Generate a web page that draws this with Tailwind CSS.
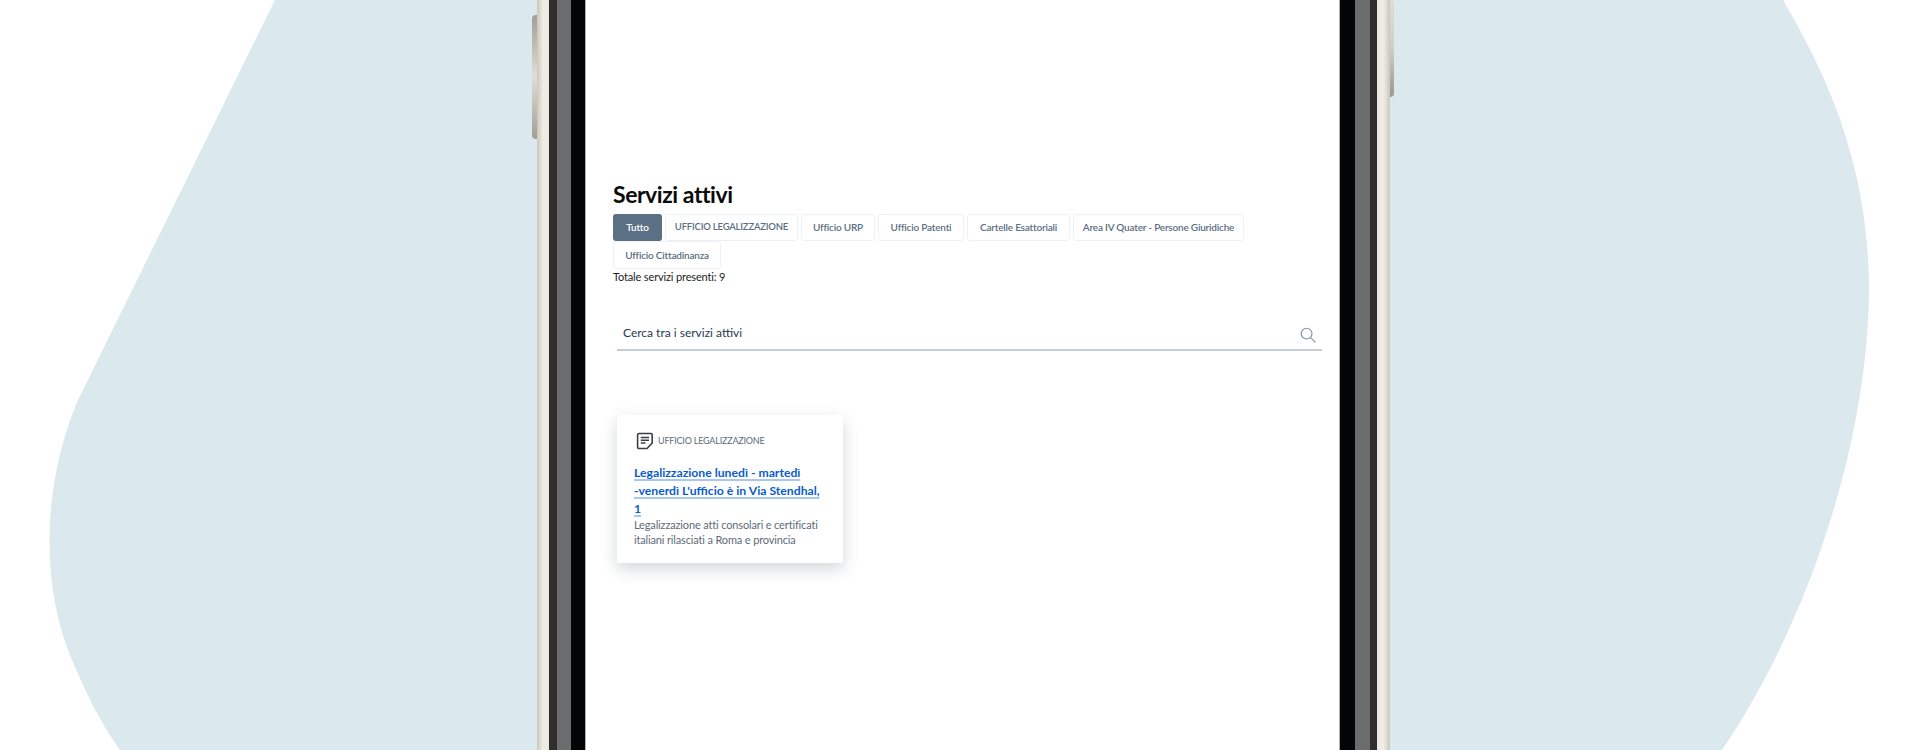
<!DOCTYPE html>
<html lang="it">
<head>
    <meta charset="UTF-8">
    <title>Servizi attivi</title>
    <script src="https://cdn.jsdelivr.net/npm/@tailwindcss/browser@4"></script>
</head>
<body class="bg-white font-['Lato','Noto_Sans',sans-serif] overflow-hidden">
    <div class="relative w-[1920px] h-[750px] overflow-hidden">
        <!-- background blobs -->
        <svg class="absolute inset-0" width="1920" height="750" viewBox="0 0 1920 750">
            <path fill="#dbe8ed" d="M275 0 L78 400 C40 490 42 590 72 660 C88 698 102 725 120 750 L1722 750 C1810 620 1868 440 1869 290 C1869 170 1830 80 1783 0 Z"/>
        </svg>

        <!-- side buttons -->
        <div class="absolute left-[532px] top-[15px] w-[6px] h-[124px] rounded-l-sm bg-gradient-to-b from-[#a09f96] via-[#e0ded6] to-[#a09f96]"></div>
        <div class="absolute left-[1390px] top-0 w-[4px] h-[97px] rounded-r-sm bg-gradient-to-b from-[#dedcd3] via-[#d0cec5] to-[#9a998f]"></div>

        <!-- phone -->
        <div class="relative flex h-full ml-[537px] w-[853px]">
            <div class="w-[12px] bg-gradient-to-r from-[#c9c6bc] via-[#f0ede6] to-[#ebe8e1]"></div>
            <div class="w-[8px] bg-[#2e2e2e]"></div>
            <div class="w-[14px] bg-[#6b6d6c]"></div>
            <div class="w-[14px] bg-[#020406]"></div>

            <main class="w-[755px] bg-white border-x border-[#b0b0b0] pt-[178px] pl-[27px] pr-[17px]">
                <h1 class="text-[23px] leading-[32px] font-bold text-[#0b0b0b] tracking-[-0.45px]">Servizi attivi</h1>
                <div class="flex flex-wrap gap-x-[3px] mt-[4px] w-[640px] text-[10px] font-semibold text-[#5b6f82] tracking-[-0.2px] whitespace-nowrap">
                    <button class="h-[27px] w-[49px] rounded-[3px] bg-[#5b6f85] text-white">Tutto</button>
                    <button class="h-[27px] w-[133px] rounded-[3px] border border-[#eef1f4] text-[9.5px]">UFFICIO LEGALIZZAZIONE</button>
                    <button class="h-[27px] w-[74px] rounded-[3px] border border-[#eef1f4]">Ufficio URP</button>
                    <button class="h-[27px] w-[86px] rounded-[3px] border border-[#eef1f4]">Ufficio Patenti</button>
                    <button class="h-[27px] w-[103px] rounded-[3px] border border-[#eef1f4]">Cartelle Esattoriali</button>
                    <button class="h-[27px] w-[171px] rounded-[3px] border border-[#eef1f4]">Area IV Quater - Persone Giuridiche</button>
                    <button class="h-[28px] w-[108px] rounded-[3px] border border-[#eef1f4]">Ufficio Cittadinanza</button>
                </div>
                <p class="text-[11px] leading-[16px] text-[#1c1c1c] tracking-[-0.15px]">Totale servizi presenti: 9</p>

                <div class="flex items-center justify-between mt-[34px] ml-[4px] h-[32px] pl-[6px] pr-[6px] border-b-2 border-[#c5ced6] w-[705px]">
                    <span class="text-[12px] text-[#1f3a52] -mt-[2px]">Cerca tra i servizi attivi</span>
                    <svg class="w-[16px] h-[16px] mt-[2px]" viewBox="0 0 16 16" fill="none" stroke="#7f8f9c" stroke-width="1.1">
                        <circle cx="6.6" cy="6.6" r="5.4"/>
                        <path d="M10.6 10.6 L15.4 15.4"/>
                    </svg>
                </div>

                <article class="mt-[64px] ml-[4px] w-[226px] h-[148px] bg-white rounded-[2px] shadow-[0_6px_16px_rgba(60,70,80,0.22)] px-[17px] pt-[17px]">
                    <div class="flex items-center gap-[4px] pl-[2px]">
                        <svg class="w-[18px] h-[18px]" viewBox="0 0 18 18" fill="none" stroke="#3a3f45" stroke-width="1.6">
                            <path d="M3 1.5 H15 Q16.2 1.5 16.2 3 V11 L11 16.5 H3 Q1.6 16.5 1.6 15 V3 Q1.6 1.5 3 1.5 Z"/>
                            <path d="M4.8 5.5 H13 M4.8 8.2 H13 M4.8 11 H9.5"/>
                        </svg>
                        <span class="text-[9px] text-[#5d6b78] tracking-[-0.2px]">UFFICIO LEGALIZZAZIONE</span>
                    </div>
                    <a href="#" class="block mt-[14px] text-[12.2px] leading-[18px] font-bold text-[#0a5ccc] underline decoration-[#a9c8f0] decoration-2 underline-offset-2">Legalizzazione lunedì - martedì<br>-venerdì L'ufficio è in Via Stendhal, 1</a>
                    <p class="text-[11px] leading-[14.5px] text-[#5d6b78] tracking-[-0.15px]">Legalizzazione atti consolari e certificati italiani rilasciati a Roma e provincia</p>
                </article>
            </main>

            <div class="w-[15px] bg-[#020406]"></div>
            <div class="w-[15px] bg-[#6b6d6c]"></div>
            <div class="w-[7px] bg-[#2e2e2e]"></div>
            <div class="w-[13px] bg-gradient-to-r from-[#ebe8e1] via-[#f0ede6] to-[#c9c6bc]"></div>
        </div>
    </div>
</body>
</html>
